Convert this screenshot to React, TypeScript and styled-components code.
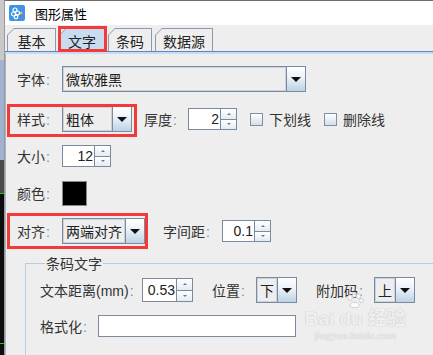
import React from 'react';
import styled, { createGlobalStyle } from 'styled-components';

const GlobalStyle = createGlobalStyle`
  html, body {
    margin: 0;
    padding: 0;
    background: #eeeeee;
    overflow: hidden;
  }
  body {
    font-family: "Liberation Sans", "Noto Sans CJK SC", sans-serif;
    color: #333333;
  }
`;

const Screen = styled.div`
  display: flex;
  width: 433px;
  height: 355px;
  overflow: hidden;
  position: relative;
`;

const DesktopStrip = styled.div`
  width: 4px;
  flex: none;
  background: linear-gradient(
    to bottom,
    #c9c9c9 0,
    #c9c9c9 60px,
    #9fb2cf 60px,
    #9fb2cf 160px,
    #4a4a4a 160px,
    #4a4a4a 193px,
    #22c322 193px,
    #22c322 194px,
    #0d0d0d 194px,
    #0d0d0d 343px,
    #22c322 343px,
    #22c322 344px,
    #0d0d0d 344px
  );
`;

const Window = styled.div`
  flex: 1;
  display: flex;
  flex-direction: column;
  border-left: 1px solid #9a9a9a;
  border-top: 1px solid #6d6d6d;
  min-width: 0;
`;

const TitleBar = styled.div`
  height: 24px;
  background: #ffffff;
  display: flex;
  align-items: center;
  padding-left: 4px;
  gap: 10px;
`;

const TitleText = styled.span`
  font-size: 13px;
  color: #000000;
  font-family: "Noto Sans CJK SC", sans-serif;
`;

const TabStrip = styled.div`
  display: flex;
  align-items: flex-end;
  gap: 3px;
  height: 26px;
  padding-left: 2px;
  border-bottom: 1px solid #6382bf;
  position: relative;
`;

const TabOuter = styled.div<{ $w: number; $active?: boolean }>`
  width: ${p => p.$w}px;
  height: ${p => (p.$active ? 24 : 23)}px;
  background: #8a9bb0;
  clip-path: polygon(7px 0, 100% 0, 100% 100%, 0 100%, 0 7px);
  display: flex;
  margin-bottom: ${p => (p.$active ? -1 : 0)}px;
`;

const TabInner = styled.div<{ $active?: boolean }>`
  flex: 1;
  margin: 1px 1px 0 1px;
  background: ${p => (p.$active ? '#c8dcf0' : '#eeeeee')};
  clip-path: polygon(6px 0, 100% 0, 100% 100%, 0 100%, 0 6px);
  display: flex;
  align-items: center;
  justify-content: center;
  font-size: 14px;
  color: #222222;
  padding-top: 1px;
`;

const Highlight = styled.div<{ $t: number; $r: number; $b: number; $l: number }>`
  position: relative;
  display: flex;
  align-items: center;

  &::after {
    content: '';
    position: absolute;
    top: ${p => p.$t}px;
    right: ${p => p.$r}px;
    bottom: ${p => p.$b}px;
    left: ${p => p.$l}px;
    border: 3px solid #f23a3a;
    pointer-events: none;
  }
`;

const TabBand = styled.div`
  height: 2px;
  background: #c8dcf0;
`;

const Panel = styled.div`
  flex: 1;
  border-left: 1px solid #a9b3bf;
  padding-left: 11px;
  display: flex;
  flex-direction: column;
`;

const Row = styled.div<{ $mt: number; $h?: number }>`
  display: flex;
  align-items: center;
  height: ${p => p.$h ?? 26}px;
  margin-top: ${p => p.$mt}px;
`;

const Label = styled.span<{ $w: number; $ml?: number }>`
  width: ${p => p.$w}px;
  margin-left: ${p => p.$ml ?? 0}px;
  flex: none;
  font-size: 14px;
  color: #333333;
  white-space: nowrap;
`;

const Colon = styled.span`
  color: #6c8fbf;
  margin-left: 1px;
`;

const Combo = styled.div<{ $w: number; $h?: number }>`
  width: ${p => p.$w}px;
  height: ${p => p.$h ?? 26}px;
  display: flex;
  border: 1px solid #7b8b9c;
  box-sizing: border-box;
  flex: none;
`;

const ComboText = styled.div`
  flex: 1;
  background: #eeeeee;
  border: 1px solid #c6d2de;
  display: flex;
  align-items: center;
  padding-left: 2px;
  font-size: 14px;
  color: #222222;
  font-family: "Noto Sans CJK SC", sans-serif;
  overflow: hidden;
  white-space: nowrap;
`;

const ComboButton = styled.div`
  width: 18px;
  flex: none;
  border-left: 1px solid #7b8b9c;
  background: linear-gradient(to bottom, #ffffff 0%, #eaf1f8 45%, #bcd2e6 100%);
  display: flex;
  align-items: center;
  justify-content: center;

  &::before {
    content: '';
    border-left: 5px solid transparent;
    border-right: 5px solid transparent;
    border-top: 5px solid #111111;
  }
`;

const Spinner = styled.div<{ $w: number; $h?: number }>`
  width: ${p => p.$w}px;
  height: ${p => p.$h ?? 22}px;
  display: flex;
  flex: none;
  box-sizing: border-box;
`;

const SpinField = styled.div`
  flex: 1;
  background: #ffffff;
  border: 1px solid #7b8b9c;
  border-right: none;
  display: flex;
  align-items: center;
  justify-content: flex-end;
  padding-right: 1px;
  font-size: 14px;
  color: #222222;
`;

const SpinButtons = styled.div`
  width: 15px;
  display: flex;
  flex-direction: column;
  border: 1px solid #7b8b9c;
`;

const SpinArrow = styled.div<{ $down?: boolean }>`
  flex: 1;
  background: linear-gradient(to bottom, #ffffff, #e3ebf3);
  display: flex;
  align-items: center;
  justify-content: center;
  & + & {
    border-top: 1px solid #7b8b9c;
  }

  &::before {
    content: '';
    border-left: 2px solid transparent;
    border-right: 2px solid transparent;
    ${p => (p.$down ? 'border-top: 2px solid #777;' : 'border-bottom: 2px solid #777;')}
  }
`;

const CheckBox = styled.span<{ $ml: number }>`
  width: 11px;
  height: 11px;
  margin-left: ${p => p.$ml}px;
  border: 1px solid #7d8fa3;
  background: linear-gradient(to bottom, #ffffff, #d3deea);
  flex: none;
`;

const CheckLabel = styled.span`
  margin-left: 6px;
  font-size: 14px;
  color: #333333;
`;

const Swatch = styled.div`
  width: 25px;
  height: 25px;
  background: #000000;
  border: 1px solid #888888;
  box-sizing: border-box;
`;

const Group = styled.fieldset`
  margin: 9px -40px 0 8px;
  padding: 2px 0 0 14px;
  border: 1px solid #b9cde0;
  border-right: none;
  border-bottom: none;
  flex: 1;
  display: flex;
  flex-direction: column;
  min-width: 0;
`;

const GroupTitle = styled.legend`
  font-size: 14px;
  color: #333333;
  padding: 0 1px;
  margin-left: 5px;
  font-family: "Noto Sans CJK SC", sans-serif;
`;

const TextField = styled.div<{ $w: number }>`
  width: ${p => p.$w}px;
  height: 22px;
  box-sizing: border-box;
  background: #ffffff;
  border: 1px solid #7b8b9c;
`;

const Watermark = styled.div`
  position: absolute;
  right: 27px;
  bottom: 14px;
  display: flex;
  flex-direction: column;
  align-items: center;
  color: rgba(255, 255, 255, 0.75);
  text-shadow: 0 0 1px #c4c4c4, 0 0 1px #c4c4c4;
  pointer-events: none;
`;

const WmMain = styled.div`
  font-size: 19px;
  font-weight: 700;
  font-family: "Liberation Sans", "Noto Sans CJK SC", sans-serif;
  line-height: 20px;
`;

const WmSub = styled.div`
  font-size: 11px;
  font-family: "Liberation Serif", serif;
  line-height: 11px;
  margin-top: 1px;
`;

const AppIcon = () => (
  <svg width="16" height="16" viewBox="0 0 16 16">
    <rect x="0" y="0" width="16" height="16" rx="2" fill="#3e94e8" />
    <g fill="none" stroke="#ffffff" strokeWidth="1.2">
      <circle cx="6" cy="5" r="2" />
      <circle cx="4.5" cy="9" r="2" />
      <circle cx="8.5" cy="8" r="2" />
      <circle cx="7" cy="12" r="1.8" />
    </g>
    <circle cx="12" cy="8" r="1.3" fill="#f5c542" />
    <circle cx="12" cy="11" r="1" fill="#e84b3c" />
  </svg>
);

const Paw = () => (
  <svg width="22" height="17" viewBox="0 0 30 24">
    <g fill="rgba(255,255,255,0.75)" stroke="#c6c6c6" strokeWidth="1.2">
      <ellipse cx="8" cy="8" rx="3" ry="4" />
      <ellipse cx="14" cy="4" rx="3" ry="3.5" />
      <ellipse cx="20" cy="6" rx="3" ry="3.5" />
      <ellipse cx="24" cy="12" rx="2.5" ry="3" />
      <path d="M8 20 C8 13, 20 12, 21 19 C21 23, 9 23, 8 20 Z" />
    </g>
  </svg>
);

const Field = ({ text }: { text: string }) => (
  <>
    {text}
    <Colon>:</Colon>
  </>
);

const tabs = [
  { name: '基本', w: 49 },
  { name: '文字', w: 46, active: true },
  { name: '条码', w: 44 },
  { name: '数据源', w: 58 },
];

const App: React.FC = () => {
  return (
    <Screen>
      <GlobalStyle />
      <DesktopStrip />
      <Window>
        <TitleBar>
          <AppIcon />
          <TitleText>图形属性</TitleText>
        </TitleBar>
        <TabStrip>
          {tabs.map(t =>
            t.active ? (
              <Highlight key={t.name} $t={-2} $r={-2} $b={-1} $l={-1}>
                <TabOuter $w={t.w} $active>
                  <TabInner $active>{t.name}</TabInner>
                </TabOuter>
              </Highlight>
            ) : (
              <TabOuter key={t.name} $w={t.w}>
                <TabInner>{t.name}</TabInner>
              </TabOuter>
            )
          )}
        </TabStrip>
        <TabBand />
        <Panel>
          <Row $mt={12}>
            <Label $w={45}><Field text="字体" /></Label>
            <Combo $w={244}>
              <ComboText>微软雅黑</ComboText>
              <ComboButton />
            </Combo>
          </Row>

          <Row $mt={14}>
            <Highlight $t={-2} $r={-5} $b={-5} $l={-10}>
              <Label $w={45}><Field text="样式" /></Label>
              <Combo $w={70}>
                <ComboText>粗体</ComboText>
                <ComboButton />
              </Combo>
            </Highlight>
            <Label $w={44} $ml={12}><Field text="厚度" /></Label>
            <Spinner $w={49}>
              <SpinField>2</SpinField>
              <SpinButtons>
                <SpinArrow />
                <SpinArrow $down />
              </SpinButtons>
            </Spinner>
            <CheckBox $ml={13} />
            <CheckLabel>下划线</CheckLabel>
            <CheckBox $ml={13} />
            <CheckLabel>删除线</CheckLabel>
          </Row>

          <Row $mt={11}>
            <Label $w={45}><Field text="大小" /></Label>
            <Spinner $w={49}>
              <SpinField>12</SpinField>
              <SpinButtons>
                <SpinArrow />
                <SpinArrow $down />
              </SpinButtons>
            </Spinner>
          </Row>

          <Row $mt={11}>
            <Label $w={45}><Field text="颜色" /></Label>
            <Swatch />
          </Row>

          <Row $mt={12}>
            <Highlight $t={-5} $r={-3} $b={-5} $l={-10}>
              <Label $w={45}><Field text="对齐" /></Label>
              <Combo $w={83}>
                <ComboText>两端对齐</ComboText>
                <ComboButton />
              </Combo>
            </Highlight>
            <Label $w={59} $ml={18}><Field text="字间距" /></Label>
            <Spinner $w={49}>
              <SpinField>0.1</SpinField>
              <SpinButtons>
                <SpinArrow />
                <SpinArrow $down />
              </SpinButtons>
            </Spinner>
          </Row>

          <Group>
            <GroupTitle>条码文字</GroupTitle>
            <Row $mt={2}>
              <Label $w={102}><Field text="文本距离(mm)" /></Label>
              <Spinner $w={51} $h={24}>
                <SpinField>0.53</SpinField>
                <SpinButtons>
                  <SpinArrow />
                  <SpinArrow $down />
                </SpinButtons>
              </Spinner>
              <Label $w={44} $ml={19}><Field text="位置" /></Label>
              <Combo $w={41}>
                <ComboText>下</ComboText>
                <ComboButton />
              </Combo>
              <Label $w={58} $ml={19}><Field text="附加码" /></Label>
              <Combo $w={41}>
                <ComboText>上</ComboText>
                <ComboButton />
              </Combo>
            </Row>
            <Row $mt={12} $h={22}>
              <Label $w={58}><Field text="格式化" /></Label>
              <TextField $w={198} />
            </Row>
          </Group>
        </Panel>
      </Window>
      <Watermark>
        <Paw />
        <WmMain>Bai du 经验</WmMain>
        <WmSub>jingyan.baidu.com</WmSub>
      </Watermark>
    </Screen>
  );
};

export default App;
